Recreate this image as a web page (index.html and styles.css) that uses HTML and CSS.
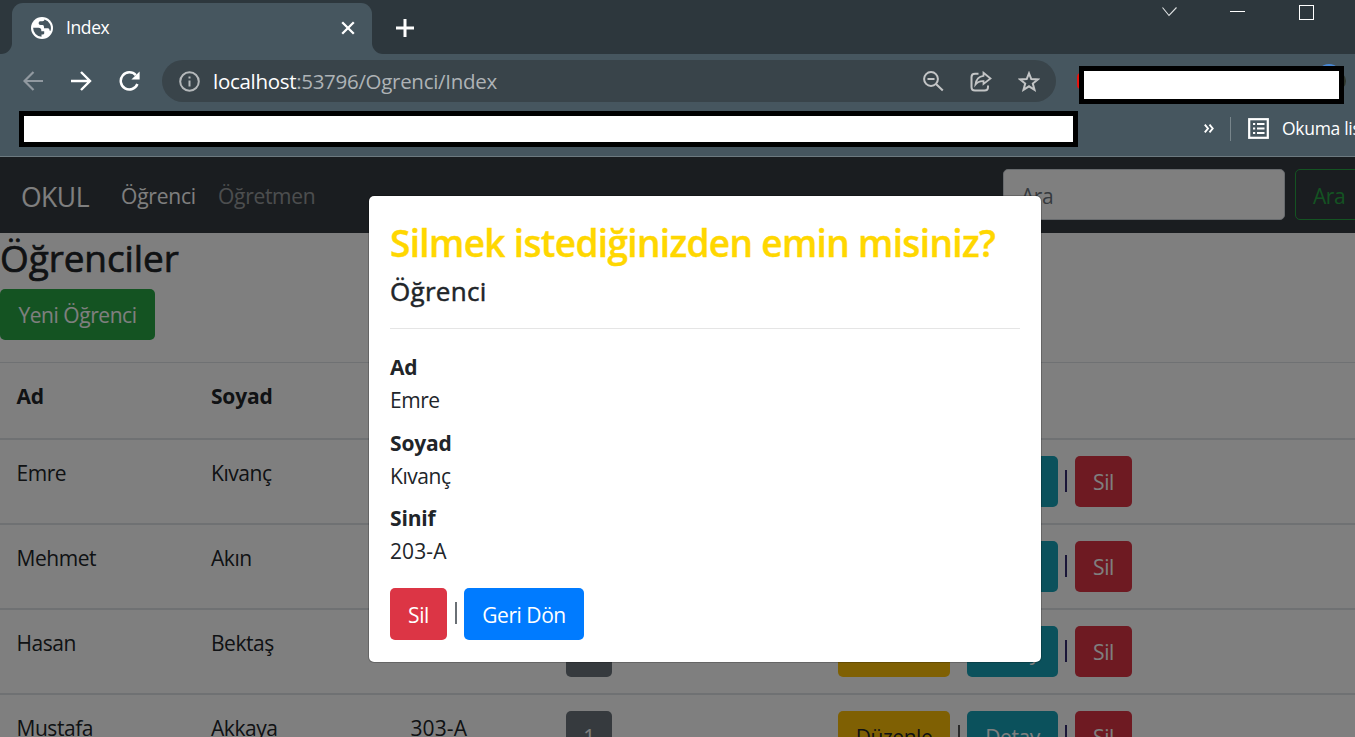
FILE: index.html
```html
<!DOCTYPE html>
<html lang="tr">
<head>
<meta charset="utf-8">
<title>Index</title>
<link rel="stylesheet" href="styles.css">
</head>
<body>
<div class="tabstrip">
  <div class="strip-edge"></div>
  <div class="tab">
    <svg class="globe" width="22" height="22" viewBox="0 0 22 22"><circle cx="11" cy="11" r="11" fill="#fff"/><path d="M2.100 10.800H7.500Q10.300 10.800 10.300 13.300V14.300H13.200V16.600Q13.200 17.600 11.600 17.600H10.500V19.700A9 9 0 0 1 2.100 10.800Z M13.600 2.400Q13.400 4.200 11.500 4.200H9.200Q7.600 4.400 7.600 6.200 7.600 8 9.500 8H11.600Q13 8.200 13 10V11.300H17.200Q18.600 11.500 18.600 13.500L19.400 14A9 9 0 0 0 13.600 2.400Z" fill="#46565f"/></svg>
    <span class="tab-title">Index</span>
    <svg class="tab-close" width="14" height="14" viewBox="0 0 14 14"><path d="M1.2 1.2 12.8 12.8M12.8 1.2 1.2 12.8" stroke="#fff" stroke-width="2.3"/></svg>
  </div>
  <div class="strip-rest">
    <svg width="18" height="18" viewBox="0 0 18 18"><path d="M9 0V18M0 9H18" stroke="#fff" stroke-width="3"/></svg>
    <div class="window-controls">
      <svg width="15" height="10" viewBox="0 0 15 10"><path d="M.5.5 7 8.5 14.5.5" fill="none" stroke="#dfe2e3" stroke-width="1.1"/></svg>
      <span class="minimize"></span>
      <span class="maximize"></span>
    </div>
  </div>
</div>
<div class="toolbar">
  <svg class="nav-icon" width="21" height="20" viewBox="0 0 21 20"><path d="M20 10H2M10.5 1 1.5 10l9 9" fill="none" stroke="#9199a0" stroke-width="2.2"/></svg>
  <svg class="nav-icon" width="21" height="20" viewBox="0 0 21 20"><path d="M0 10H18.5M10 1l9 9-9 9" fill="none" stroke="#fff" stroke-width="2.4"/></svg>
  <svg class="nav-icon" width="21" height="20" viewBox="0 0 21 20"><path d="M16.8 4.2A8.6 8.6 0 1 0 18.4 13" fill="none" stroke="#fff" stroke-width="2.5"/><path d="M20.6.4V8.6H12.4Z" fill="#fff"/></svg>
  <div class="omnibox">
    <svg width="21" height="21" viewBox="0 0 21 21"><circle cx="10.5" cy="10.5" r="9.3" fill="none" stroke="#b4b8ba" stroke-width="2"/><path d="M10.5 9.5v6M10.5 5.5v2" stroke="#b4b8ba" stroke-width="2"/></svg>
    <span class="url"><b>localhost</b>:53796/Ogrenci/Index</span>
    <svg width="21" height="21" viewBox="0 0 21 21"><circle cx="8" cy="8" r="6.9" fill="none" stroke="#c3c5c6" stroke-width="2"/><path d="M4.5 8h7M13 13l6.8 6.4" stroke="#c3c5c6" stroke-width="2.1" fill="none"/></svg>
    <svg width="22" height="21" viewBox="0 0 22 21"><path d="M8.5 2.7H5Q1.5 2.7 1.5 6V16Q1.500 19.500 5 19.500H14.500Q18 19.500 18 16V14.500" fill="none" stroke="#c3c5c6" stroke-width="2"/><path d="M13.500 1.800 20.500 7.500 13.500 13V10.200Q8.500 9.800 5.500 13.500 6.500 5.500 13.500 4.800Z" fill="none" stroke="#c3c5c6" stroke-width="1.800"/></svg>
    <svg width="22" height="21" viewBox="0 0 22 21"><path d="M11 2.300 13.300 8 19.800 8.400 14.800 12.500 16.500 18.800 11 15.300 5.500 18.800 7.200 12.500 2.200 8.400 8.700 8Z" fill="none" stroke="#c3c5c6" stroke-width="2"/></svg>
  </div>
  <div class="extensions">
    <span class="ext-red"></span><span class="ext-blue"></span><span class="ext-avatar"></span>
    <div class="blank"></div>
  </div>
</div>
<div class="bookmarks">
  <div class="blank"></div>
  <svg class="more" width="10" height="9" viewBox="0 0 10 9"><path d="M.8.700 4 4.500.8 8.300M5.500.700 8.700 4.500 5.500 8.300" fill="none" stroke="#fff" stroke-width="1.900"/></svg>
  <span class="divider"></span>
  <svg class="list-icon" width="21" height="21" viewBox="0 0 21 21"><rect x="1.200" y="1.200" width="18.600" height="18.600" fill="none" stroke="#fff" stroke-width="2.200"/><path d="M5 6h2.200M9 6h7.500M5 10.500h2.200M9 10.500h7.500M5 15h2.200M9 15h7.500" stroke="#fff" stroke-width="2"/></svg>
  <span class="reading">Okuma listesi</span>
</div>
<main class="page">
  <nav class="navbar">
    <span class="brand">OKUL</span>
    <span class="nav-link active">Öğrenci</span>
    <span class="nav-link">Öğretmen</span>
    <div class="search">Ara</div>
    <div class="search-btn">Ara</div>
  </nav>
  <h2 class="heading">Öğrenciler</h2>
  <span class="btn green">Yeni Öğrenci</span>
  <div class="table">
    <div class="row head"><span>Ad</span><span>Soyad</span><span></span><span></span><span></span></div>
    <div class="row"><span>Emre</span><span>Kıvanç</span><span></span><span><i class="btn gray"></i></span><span class="actions"><i class="btn yellow"></i><i class="bar"></i><i class="btn teal"></i><i class="bar navy"></i><i class="btn red">Sil</i></span></div>
    <div class="row"><span>Mehmet</span><span>Akın</span><span></span><span><i class="btn gray"></i></span><span class="actions"><i class="btn yellow"></i><i class="bar"></i><i class="btn teal"></i><i class="bar navy"></i><i class="btn red">Sil</i></span></div>
    <div class="row"><span>Hasan</span><span>Bektaş</span><span></span><span><i class="btn gray"></i></span><span class="actions"><i class="btn yellow"></i><i class="bar"></i><i class="btn teal">Detay</i><i class="bar navy"></i><i class="btn red">Sil</i></span></div>
    <div class="row"><span>Mustafa</span><span>Akkaya</span><span class="wide">303-A</span><span><i class="btn gray">1</i></span><span class="actions"><i class="btn yellow">Düzenle</i><i class="bar"></i><i class="btn teal">Detay</i><i class="bar navy"></i><i class="btn red">Sil</i></span></div>
  </div>
  <div class="backdrop"></div>
  <section class="modal">
    <h2 class="modal-title">Silmek istediğinizden emin misiniz?</h2>
    <h4 class="modal-sub">Öğrenci</h4>
    <dl class="details">
      <dt>Ad</dt><dd>Emre</dd>
      <dt>Soyad</dt><dd>Kıvanç</dd>
      <dt>Sinif</dt><dd class="wide">203-A</dd>
    </dl>
    <div class="modal-actions"><span class="btn red">Sil</span><i class="bar"></i><span class="btn blue">Geri Dön</span></div>
  </section>
</main>
</body>
</html>
```
FILE: styles.css
```css
* { box-sizing: border-box; }
html, body { height: 737px; overflow: hidden; }
body {
  margin: 0;
  display: flex;
  flex-direction: column;
  font-family: "Open Sans", "Noto Sans", sans-serif;
  font-size: 21px;
  letter-spacing: -0.45px;
  color: #212529;
  background: #46565f;
  white-space: nowrap;
}
h2, h4, dl, dd { margin: 0; }
i { font-style: normal; }
svg { display: block; flex: none; }

/* Browser tabs */
.tabstrip { display: flex; height: 54px; flex: none; }
.strip-edge { width: 12px; background: #2d373d; border-bottom-right-radius: 11px; }
.tab {
  width: 360px;
  display: flex;
  align-items: center;
  padding: 0 17px 0 19px;
  background: linear-gradient(#2d373d, #2d373d) top / 100% 16px no-repeat;
  position: relative;
}
.tab::before {
  content: "";
  position: absolute;
  inset: 3px 0 0;
  background: #46565f;
  border-radius: 11px 11px 0 0;
}
.tab > * { position: relative; top: 1px; }
.tab > .tab-title { top: 0; flex: 1; margin-left: 13px; color: #fff; font-size: 17.5px; letter-spacing: -0.4px; }
.strip-rest {
  flex: 1;
  display: flex;
  justify-content: space-between;
  padding: 19px 41px 0 24px;
  background: #2d373d;
  border-bottom-left-radius: 11px;
}
.window-controls { display: flex; margin-top: -14px; }
.window-controls svg { margin-top: 2px; }
.minimize { width: 15px; height: 1px; margin: 6px 54px 0 53px; background: #fff; }
.maximize { width: 15px; height: 15px; border: 1px solid #fff; }

/* Address row */
.tabstrip, .toolbar, .bookmarks { width: 1355px; }
.toolbar { display: flex; height: 56px; flex: none; padding-left: 23px; }
.nav-icon { margin: 17px 27px 0 0; }
.omnibox {
  display: flex;
  align-items: center;
  width: 894px;
  height: 42px;
  margin: 6px 0 0 -5px;
  padding: 0 16px 0 17px;
  border-radius: 21px;
  background: #39444a;
}
.omnibox svg + svg { margin-left: 26px; }
.url { flex: 1; margin-left: 13px; color: #aeb3b6; font-size: 20.5px; letter-spacing: -0.3px; }
.url b { font-weight: 400; color: #fff; }
.blank { border: 5px solid #000; background: #fff; }
.extensions { position: relative; margin: 12px 0 0 23px; }
.extensions .blank { position: relative; width: 265px; height: 38px; }
.ext-red { position: absolute; left: -2px; top: 7px; width: 8px; height: 16px; border-radius: 4px; background: #e8130f; }
.ext-blue { position: absolute; left: 237px; top: -2px; width: 26px; height: 26px; border-radius: 50%; background: #4887d4; }
.ext-avatar { position: absolute; left: 247px; top: 5px; width: 20px; height: 20px; border-radius: 50%; background: #30382f; }

/* Bookmark row */
.bookmarks {
  display: flex;
  height: 47px;
  flex: none;
  padding-left: 19px;
  border-bottom: 1px solid #6d7a80;
  overflow: hidden;
}
.bookmarks .blank { width: 1059px; height: 36px; margin-top: 1px; flex: none; }
.more { margin: 14px 0 0 126px; }
.divider { width: 1px; height: 24px; margin: 7px 17px 0 16px; background: #78858b; flex: none; }
.list-icon { margin-top: 8px; }
.reading { margin: 6px 0 0 13px; color: #fff; font-size: 17.5px; letter-spacing: -0.3px; }

/* Page */
.page { position: relative; height: 580px; flex: none; background: #fff; overflow: hidden; }
.navbar { display: flex; align-items: center; height: 76px; padding: 0 0 0 21px; background: #343a40; }
.brand { color: #fff; font-size: 26.5px; letter-spacing: -0.5px; width: 100px; flex: none; padding-top: 3px; }
.nav-link { width: 97px; flex: none; padding-top: 2px; letter-spacing: -0.3px; color: rgba(255, 255, 255, .5); }
.nav-link.active { color: #fff; letter-spacing: -0.2px; }
.search {
  width: 282px;
  height: 51px;
  margin-left: 688px;
  padding: 10px 17px;
  border: 1px solid #ced4da;
  border-radius: 5px;
  background: #fff;
  color: #6c757d;
}
.search, .search-btn { flex: none; line-height: 33px; margin-bottom: 1px; }
.search-btn { width: 69px; height: 51px; margin-left: 10px; padding: 10px 17px; border: 1px solid #28a745; border-radius: 5px; color: #28a745; }
.heading { height: 56px; font-size: 37px; line-height: 49px; font-weight: 400; letter-spacing: -0.1px; -webkit-text-stroke: .7px; }
.btn { display: block; width: fit-content; height: 51px; padding: 0 17px; border-radius: 5px; line-height: 53px; color: #fff; text-align: center; }
.green { width: 155px; padding: 0; background: #28a745; }
.gray { width: 46px; padding: 0; background: #6c757d; }
.yellow { width: 112px; background: #ffc107; color: #212529; }
.teal { width: 91px; background: #17a2b8; }
.red { width: 57px; padding: 0; background: #dc3545; }
.blue { width: 120px; background: #007bff; }
.bar { width: 2px; height: 22px; margin: 14px 7px 0 8px; background: #555; }
.navy { margin: 14px 8px 0 7px; background: #342c70; }
.table { margin-top: 22px; }
.row { display: grid; grid-template-columns: 194.500px 199.500px 155.500px 272px 1fr; height: 85px; border-top: 2px solid #dee2e6; line-height: 35px; }
.row > span { padding: 16px 0 0 16.500px; }
.row.head { height: 76px; border-top-width: 1px; font-weight: 700; letter-spacing: -0.2px; }
.row .actions { display: flex; }
.wide { letter-spacing: 0.1px; }

/* Delete dialog */
.backdrop { position: absolute; inset: 0; background: rgba(0, 0, 0, .5); }
.modal {
  position: absolute;
  left: 368px;
  top: 38px;
  width: 674px;
  height: 468px;
  padding: 21px;
  border: 1px solid rgba(0, 0, 0, .2);
  border-radius: 6px;
  background: #fff;
  background-clip: padding-box;
}
.modal-title { height: 56px; color: #ffd700; font-size: 37px; line-height: 51px; font-weight: 600; letter-spacing: -0.66px; -webkit-text-stroke: .4px; }
.modal-sub { height: 56px; font-size: 26px; line-height: 36px; font-weight: 400; letter-spacing: 0.3px; -webkit-text-stroke: .5px; border-bottom: 1px solid #e5e5e5; }
.details { margin-top: 22px; line-height: 33px; }
.details dt { height: 33px; line-height: 33.500px; font-weight: 700; letter-spacing: -0.15px; }
.details dd { height: 42.500px; }
.modal-actions { display: flex; margin-top: 10px; }
.modal-actions .btn { height: 52px; line-height: 54px; }
.modal-actions .bar { background: #6a7075; }
```
